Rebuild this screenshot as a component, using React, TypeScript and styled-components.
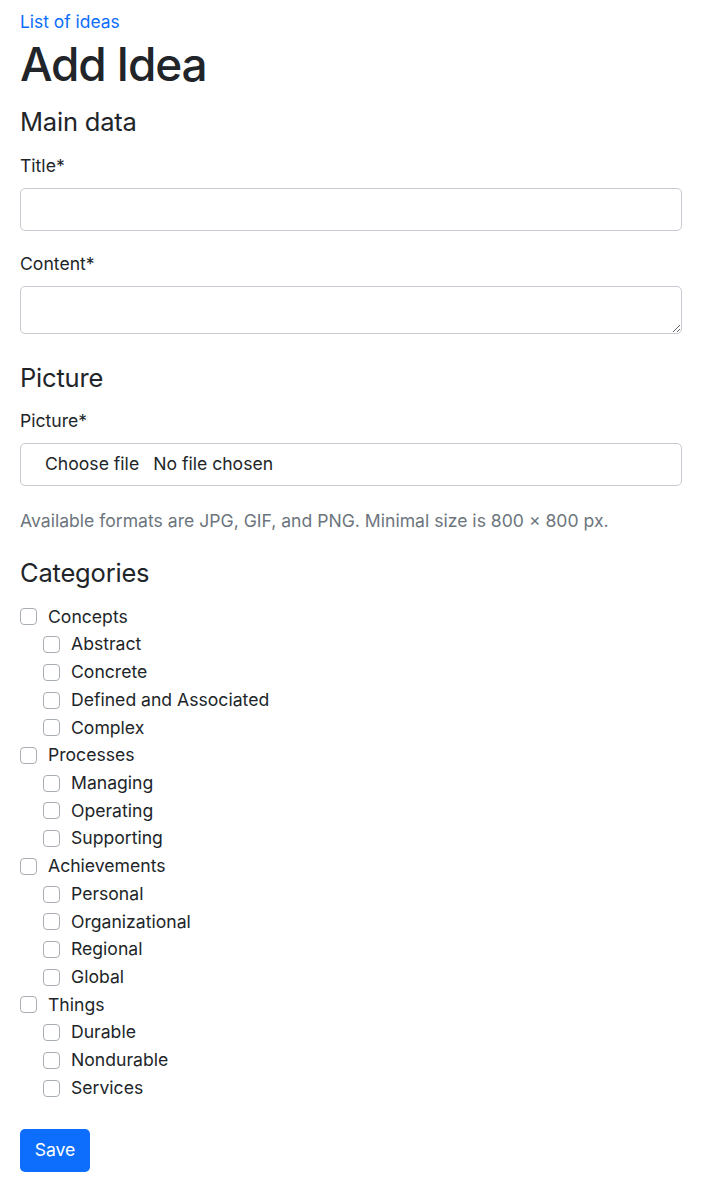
import React from 'react';
import styled, { createGlobalStyle } from 'styled-components';

const GlobalStyle = createGlobalStyle`
  * { box-sizing: border-box; }
  body {
    margin: 0;
    background: #fff;
    color: #212529;
    font-family: Inter, "Noto Sans", "Liberation Sans", sans-serif;
    font-size: 17.6px;
    line-height: 1.5;
  }
`;

const Page = styled.div`
  padding: 9px 19px 20px 20px;
`;

const BackLink = styled.a`
  display: block;
  color: #0d6efd;
  text-decoration: none;
  font-size: 17.4px;
  line-height: 26px;
`;

const Title = styled.h1`
  margin: 0 0 13px;
  font-size: 46px;
  font-weight: 500;
  line-height: 58px;
  letter-spacing: -1.2px;
`;

const SectionTitle = styled.h4<{ $top?: number; $bottom?: number }>`
  margin: ${(p) => p.$top ?? 0}px 0 ${(p) => p.$bottom ?? 16}px;
  font-size: 25.5px;
  font-weight: 400;
  line-height: 31px;
  letter-spacing: -0.2px;
`;

const Field = styled.div`
  margin-bottom: 20px;
`;

const Label = styled.label`
  display: block;
  margin-bottom: 9px;
  line-height: 26px;
`;

const TextInput = styled.input`
  display: block;
  width: 100%;
  height: 43px;
  padding: 6px 12px;
  border: 1px solid #c6cbd1;
  border-radius: 5px;
  font: inherit;
  background: #fff;
`;

const TextArea = styled.textarea`
  display: block;
  width: 100%;
  height: 48px;
  margin-top: 1px;
  padding: 6px 12px;
  border: 1px solid #c6cbd1;
  border-radius: 5px;
  font: inherit;
  resize: vertical;
`;

const FileBox = styled.div`
  display: flex;
  align-items: center;
  height: 43px;
  padding: 0 24px;
  border: 1px solid #c6cbd1;
  border-radius: 5px;
  gap: 14px;
`;

const FileButton = styled.span`
  color: #212529;
`;

const Help = styled.div`
  margin-top: 22px;
  color: #6c757d;
  line-height: 26px;
`;

const CheckList = styled.div`
  display: flex;
  flex-direction: column;
  margin-top: -1px;
`;

const CheckRow = styled.label<{ $level: number }>`
  display: flex;
  align-items: center;
  height: 27.72px;
  padding-left: ${(p) => (p.$level ? 23 : 0)}px;
  gap: 11px;
`;

const Box = styled.span`
  width: 17px;
  height: 17px;
  border: 1px solid #a9aeb4;
  border-radius: 4px;
  background: #fff;
  flex: none;
`;

const SaveButton = styled.button`
  margin-top: 27px;
  width: 70px;
  height: 43px;
  border: none;
  border-radius: 5px;
  background: #0d6efd;
  color: #fff;
  font: inherit;
`;

const categories: [string, string[]][] = [
  ['Concepts', ['Abstract', 'Concrete', 'Defined and Associated', 'Complex']],
  ['Processes', ['Managing', 'Operating', 'Supporting']],
  ['Achievements', ['Personal', 'Organizational', 'Regional', 'Global']],
  ['Things', ['Durable', 'Nondurable', 'Services']],
];

const Check = ({ text, level }: { text: string; level: number }) => (
  <CheckRow $level={level}>
    <Box />
    {text}
  </CheckRow>
);

export default function App() {
  return (
    <Page>
      <GlobalStyle />
      <BackLink href="#">List of ideas</BackLink>
      <Title>Add Idea</Title>

      <SectionTitle>Main data</SectionTitle>
      <Field>
        <Label>Title*</Label>
        <TextInput />
      </Field>
      <Field>
        <Label>Content*</Label>
        <TextArea />
      </Field>

      <SectionTitle $top={28} $bottom={15}>Picture</SectionTitle>
      <Label>Picture*</Label>
      <FileBox>
        <FileButton>Choose file</FileButton>
        <span>No file chosen</span>
      </FileBox>
      <Help>Available formats are JPG, GIF, and PNG. Minimal size is 800 × 800 px.</Help>

      <SectionTitle $top={23}>Categories</SectionTitle>
      <CheckList>
        {categories.map(([name, subs]) => (
          <React.Fragment key={name}>
            <Check text={name} level={0} />
            {subs.map((s) => (
              <Check key={s} text={s} level={1} />
            ))}
          </React.Fragment>
        ))}
      </CheckList>
      <SaveButton>Save</SaveButton>
    </Page>
  );
}
